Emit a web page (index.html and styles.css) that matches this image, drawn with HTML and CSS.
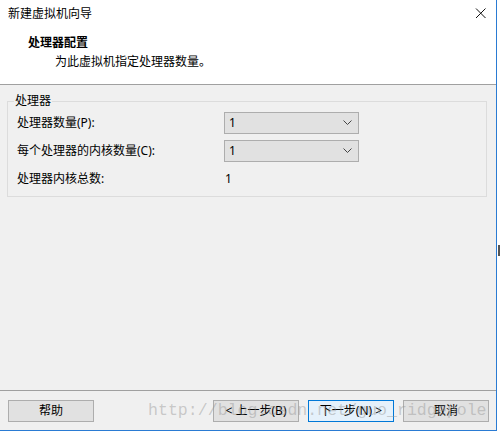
FILE: index.html
```html
<!DOCTYPE html>
<html lang="zh-CN">
<head>
<meta charset="utf-8">
<title>新建虚拟机向导</title>
<link rel="stylesheet" href="styles.css">
</head>
<body>
<div class="window">
  <div class="top">
    <div class="titlebar">
      <span class="title">新建虚拟机向导</span>
      <svg class="close" width="12" height="12" viewBox="0 0 12 12"><path d="M1 1.5 L10.5 11 M10.5 1.5 L1 11" stroke="#111" stroke-width="1" fill="none"/></svg>
    </div>
    <div class="header">
      <div class="h-title">处理器配置</div>
      <div class="h-sub">为此虚拟机指定处理器数量。</div>
    </div>
  </div>
  <div class="body">
    <div class="group">
      <span class="legend">处理器</span>
      <div class="grid">
        <span class="label">处理器数量(P):</span>
        <div class="select"><span>1</span><svg width="9" height="6" viewBox="0 0 9 6"><path d="M0.5 0.5 L4.5 4.5 L8.5 0.5" stroke="#444" stroke-width="1" fill="none"/></svg></div>
        <span class="label">每个处理器的内核数量(C):</span>
        <div class="select"><span>1</span><svg width="9" height="6" viewBox="0 0 9 6"><path d="M0.5 0.5 L4.5 4.5 L8.5 0.5" stroke="#444" stroke-width="1" fill="none"/></svg></div>
        <span class="label">处理器内核总数:</span>
        <span class="value">1</span>
      </div>
    </div>
  </div>
  <div class="footer">
    <button class="btn">帮助</button>
    <div class="right-btns">
      <button class="btn">&lt; 上一步(B)</button>
      <button class="btn primary">下一步(N) &gt;</button>
      <button class="btn">取消</button>
    </div>
  </div>
  <div class="watermark">http://blog.csdn.net/guo_ridgepole</div>
</div>
<div class="edge-mark"></div>
</body>
</html>
```

FILE: styles.css
```css
html, body {
  margin: 0;
  padding: 0;
  background: #ffffff;
}
body {
  width: 500px;
  height: 432px;
  position: relative;
  overflow: hidden;
  font-family: "Noto Sans", "Noto Sans CJK SC", sans-serif;
  font-size: 12px;
  color: #000;
}
.window {
  position: relative;
  width: 496px;
  height: 430px;
  border-right: 1px solid #2a7bd3;
  border-bottom: 1px solid #2a7bd3;
  display: flex;
  flex-direction: column;
  background: #f0f0f0;
}
.top {
  background: #ffffff;
  height: 84px;
  border-bottom: 1px solid #a0a0a0;
  box-sizing: content-box;
}
.titlebar {
  height: 28px;
  display: flex;
  align-items: center;
  justify-content: space-between;
  padding: 0 9px 0 8px;
}
.title {
  line-height: 16px;
  padding-bottom: 1px;
}
.close {
  display: block;
  margin-bottom: 2px;
}
.header {
  padding-left: 28px;
}
.h-title {
  font-weight: bold;
  line-height: 16px;
  margin-top: 7px;
}
.h-sub {
  padding-left: 27px;
  line-height: 16px;
  margin-top: 3px;
}
.body {
  flex: 1;
  padding: 16px 9px 0 7px;
}
.group {
  position: relative;
  border: 1px solid #dcdcdc;
  padding: 10px 0 6px 9px;
}
.legend {
  position: absolute;
  top: -9px;
  left: 6px;
  padding: 0 1px;
  line-height: 16px;
  background: #f0f0f0;
}
.grid {
  display: grid;
  grid-template-columns: 207px 135px;
  grid-auto-rows: 22px;
  row-gap: 6px;
  align-items: center;
}
.label {
  line-height: 16px;
}
.select {
  box-sizing: border-box;
  height: 22px;
  border: 1px solid #adadad;
  background: #e1e1e1;
  display: flex;
  align-items: center;
  justify-content: space-between;
  padding: 0 6px 0 4px;
}
.select span {
  line-height: 16px;
}
.select svg {
  display: block;
}
.value {
  padding-left: 1px;
  line-height: 16px;
}
.footer {
  border-top: 1px solid #a0a0a0;
  padding: 9px 7px 8px 8px;
  display: flex;
  justify-content: space-between;
}
.right-btns {
  display: flex;
  gap: 9px;
}
.btn {
  box-sizing: border-box;
  width: 86px;
  height: 22px;
  margin: 0;
  padding: 0;
  border: 1px solid #adadad;
  background: #e1e1e1;
  font-family: "Noto Sans", "Noto Sans CJK SC", sans-serif;
  font-size: 12px;
  color: #000;
  line-height: 16px;
}
.btn.primary {
  border-color: #0078d7;
  background: #e5f1fb;
}
.watermark {
  position: absolute;
  left: 148px;
  top: 401px;
  font-family: "Liberation Mono", monospace;
  font-size: 16.6px;
  line-height: 20px;
  color: rgba(150, 150, 150, 0.45);
  pointer-events: none;
  white-space: nowrap;
}
.edge-mark {
  position: absolute;
  left: 498px;
  top: 245px;
  width: 2px;
  height: 11px;
  background: #555;
}
```
